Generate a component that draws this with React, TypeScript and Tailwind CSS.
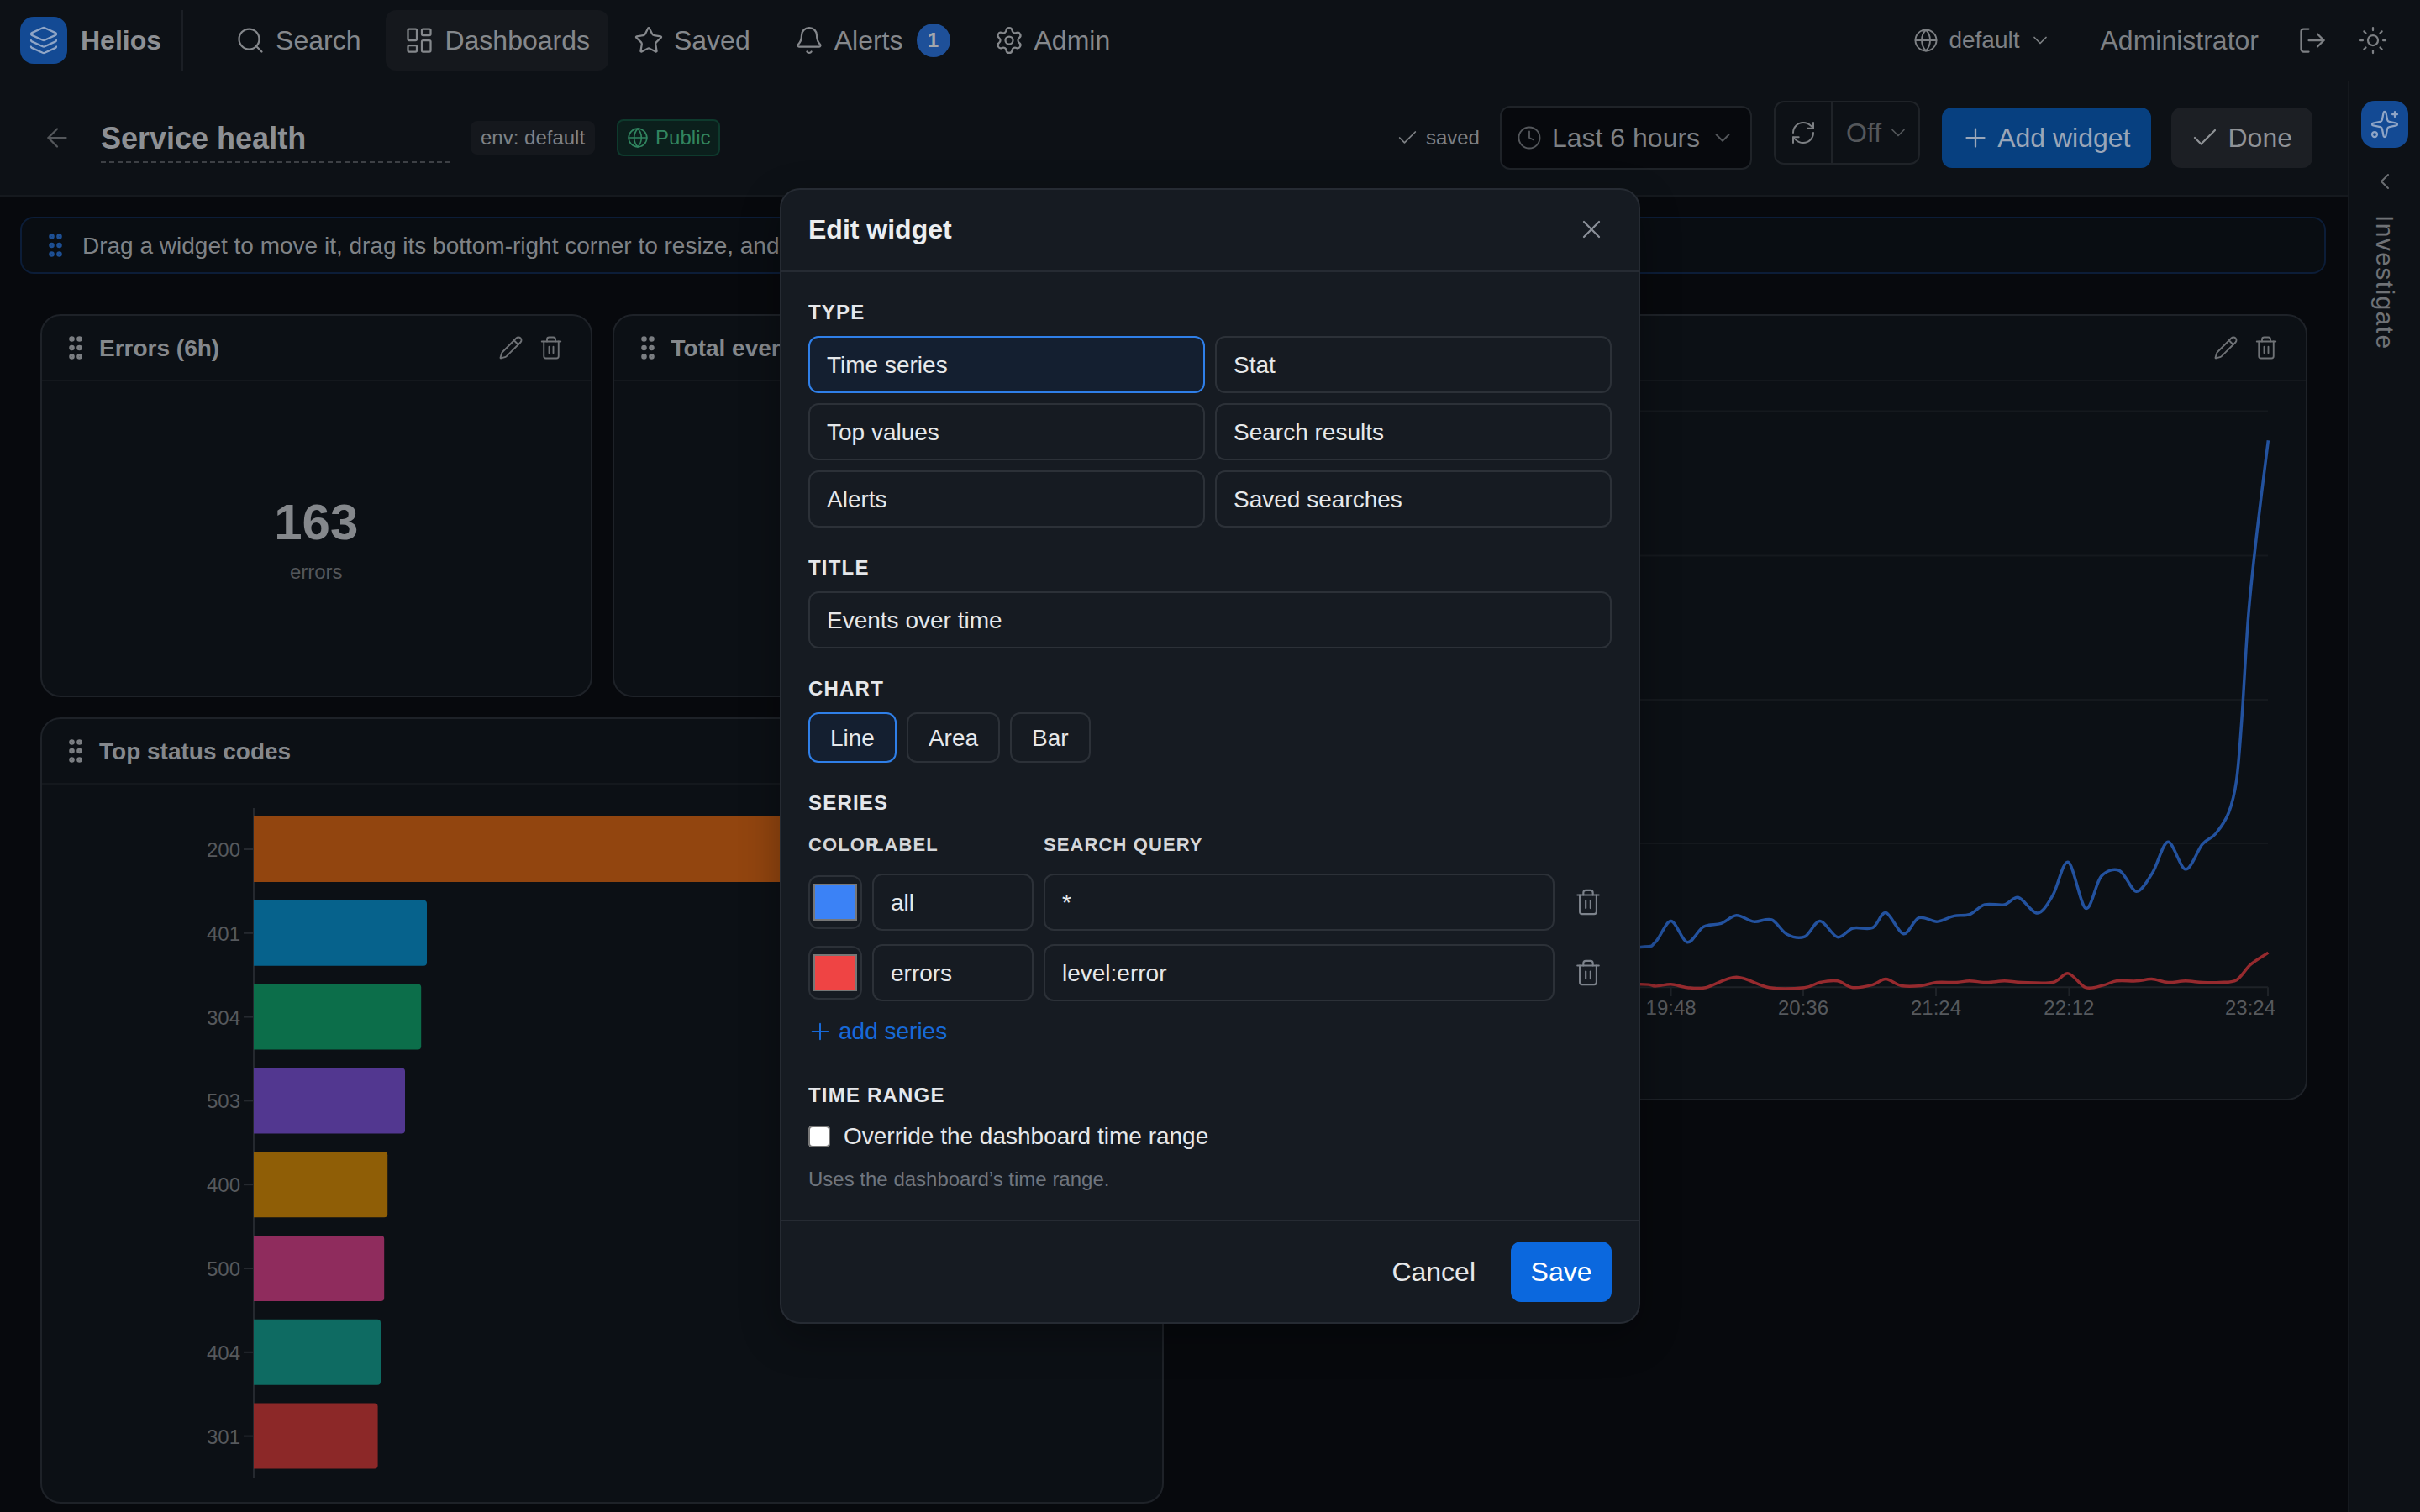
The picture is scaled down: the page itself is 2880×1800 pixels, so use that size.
import React from "react";
import {
  Layers, Search, LayoutDashboard, Star, Bell, Settings, Globe, ChevronDown, LogOut, Sun, ArrowLeft,
  Check, Clock, RefreshCw, Plus, Sparkles, ChevronLeft, GripVertical, Pencil, Trash2, X,
} from "lucide-react";

const mapX = (z: number) => (1940 + z / 1.912) / 2;
const mapY = (z: number) => (440 + z / 1.782) / 2;

const blue: [number, number][] = [[-300,1215],[-160,1225],[22,1225],[55,1215],[91,1170],[128,1215],[165,1182],[205,1175],[240,1158],[280,1171],[320,1167],[355,1198],[395,1203],[430,1170],[470,1204],[505,1185],[550,1184],[580,1152],[620,1197],[655,1163],[697,1171],[735,1159],[770,1156],[805,1135],[850,1135],[882,1120],[925,1153],[960,1115],[995,1045],[1035,1143],[1070,1075],[1112,1063],[1150,1107],[1187,1067],[1222,1002],[1262,1060],[1300,1007],[1330,985],[1360,940],[1378,870],[1390,740],[1405,520],[1425,340],[1450,150]];
const red: [number, number][] = [[-300,1305],[-160,1308],[22,1304],[55,1308],[91,1304],[128,1311],[170,1311],[240,1289],[315,1311],[395,1311],[430,1300],[470,1297],[505,1311],[550,1305],[580,1293],[615,1307],[660,1307],[695,1300],[740,1300],[770,1297],[810,1300],[850,1297],[890,1300],[960,1300],[995,1281],[1035,1311],[1075,1306],[1105,1297],[1150,1297],[1185,1293],[1222,1300],[1262,1297],[1300,1300],[1340,1300],[1378,1295],[1410,1262],[1450,1237]];

function smooth(points: [number, number][]) {
  const p = points.map(([x, y]) => [mapX(x), mapY(y)]);
  let d = `M${p[0][0]} ${p[0][1]}`;
  for (let i = 0; i < p.length - 1; i++) {
    const a = p[Math.max(i - 1, 0)], b = p[i], c = p[i + 1], e = p[Math.min(i + 2, p.length - 1)];
    const k = 0.16;
    d += ` C${b[0] + (c[0] - a[0]) * k} ${b[1] + (c[1] - a[1]) * k} ${c[0] - (e[0] - b[0]) * k} ${c[1] - (e[1] - b[1]) * k} ${c[0]} ${c[1]}`;
  }
  return d;
}

const bars = [
  { label: "200", w: 520, color: "#92450f" },
  { label: "401", w: 103, color: "#06628c" },
  { label: "304", w: 99.6, color: "#0c6e4a" },
  { label: "503", w: 90, color: "#523790" },
  { label: "400", w: 79.6, color: "#8f5e06" },
  { label: "500", w: 77.6, color: "#8f2c5d" },
  { label: "404", w: 75.5, color: "#0e6b62" },
  { label: "301", w: 73.8, color: "#8c2828" },
];

function NavItem({ icon, label, active, children }: { icon: React.ReactNode; label: string; active?: boolean; children?: React.ReactNode }) {
  return (
    <div className={`flex h-9 items-center gap-[6px] rounded-md px-[11px] text-[16px] text-[#85888c] ${active ? "bg-[#15181d]" : ""}`}>
      {icon}
      <span>{label}</span>
      {children}
    </div>
  );
}

function Card({ title, className, children }: { title: string; className?: string; children?: React.ReactNode }) {
  return (
    <div className={`flex flex-col overflow-hidden rounded-xl border border-[#1e2228] bg-[#0c1015] ${className ?? ""}`}>
      <div className="flex h-[39px] shrink-0 items-center border-b border-[#14181d] pl-[11px] pr-[16px]">
        <GripVertical size={18} strokeWidth={2.4} className="text-[#7b7e82]" />
        <span className="ml-[5px] flex-1 pt-px text-[14px] font-bold text-[#85888c]">{title}</span>
        <Pencil size={15} strokeWidth={1.5} className="text-[#6f7276]" />
        <Trash2 size={15} strokeWidth={1.5} className="ml-[9px] text-[#6f7276]" />
      </div>
      <div className="min-h-0 flex-1">{children}</div>
    </div>
  );
}

function SectionLabel({ children, className }: { children: React.ReactNode; className?: string }) {
  return <div className={`text-[12px] font-bold uppercase leading-4 tracking-[0.05em] text-[#e5e7eb] ${className ?? ""}`}>{children}</div>;
}

function TypeButton({ label, active }: { label: string; active?: boolean }) {
  return (
    <div className={`flex h-[34px] items-center rounded-md border px-[10px] pt-px text-[14px] text-[#e6e8ea] ${active ? "border-[#2f7fe8] bg-[#141f30]" : "border-[#2c3138]"}`}>
      {label}
    </div>
  );
}

const inputCls = "h-[34px] w-full rounded-md border border-[#2c3138] bg-transparent px-[10px] pt-px text-[14px] text-[#e6e8ea] outline-none";

function SeriesRow({ color, label, query }: { color: string; label: string; query: string }) {
  return (
    <>
      <input type="color" readOnly value={color} className="h-8 w-8 rounded-md border border-[#2c3138] bg-transparent" />
      <input readOnly value={label} className={inputCls} />
      <input readOnly value={query} className={inputCls} />
      <div className="flex justify-center">
        <Trash2 size={17} strokeWidth={1.5} className="text-[#7d838c]" />
      </div>
    </>
  );
}

function Modal() {
  return (
    <div className="absolute inset-0 flex items-center justify-center">
      <div className="w-[512px] rounded-xl border border-[#262b33] bg-[#161b22] shadow-[0_8px_24px_rgba(0,0,0,0.3)]">
        <div className="flex h-[49px] items-center justify-between border-b border-[#262b33] px-4 pb-px">
          <span className="text-[16px] font-bold text-[#eceef0]">Edit widget</span>
          <X size={18} strokeWidth={1.5} className="mr-[3px] text-[#8b9099]" />
        </div>
        <div className="px-4 pb-4 pt-4">
          <SectionLabel>Type</SectionLabel>
          <div className="mt-[6px] grid grid-cols-2 gap-[6px]">
            <TypeButton label="Time series" active />
            <TypeButton label="Stat" />
            <TypeButton label="Top values" />
            <TypeButton label="Search results" />
            <TypeButton label="Alerts" />
            <TypeButton label="Saved searches" />
          </div>
          <SectionLabel className="mt-4">Title</SectionLabel>
          <input readOnly value="Events over time" className={`${inputCls} mt-[6px] block`} />
          <SectionLabel className="mt-4">Chart</SectionLabel>
          <div className="mt-[6px] flex gap-[6px]">
            {["Line", "Area", "Bar"].map((c, i) => (
              <div key={c} className={`flex h-[30px] items-center rounded-md border px-[12px] pt-px text-[14px] text-[#e6e8ea] ${i === 0 ? "border-[#2f7fe8] bg-[#141f30]" : "border-[#2c3138]"}`}>
                {c}
              </div>
            ))}
          </div>
          <SectionLabel className="mt-4">Series</SectionLabel>
          <div className="mt-[9px] grid grid-cols-[32px_96px_1fr_28px] items-center gap-x-[6px] gap-y-2">
            <div className="mb-px text-[11px] font-bold leading-4 tracking-[0.05em] text-[#d5d7da]">COLOR</div>
            <div className="mb-px text-[11px] font-bold leading-4 tracking-[0.05em] text-[#d5d7da]">LABEL</div>
            <div className="mb-px text-[11px] font-bold leading-4 tracking-[0.05em] text-[#d5d7da]">SEARCH QUERY</div>
            <div />
            <SeriesRow color="#3b82f6" label="all" query="*" />
            <SeriesRow color="#ef4444" label="errors" query="level:error" />
          </div>
          <div className="mt-2 flex h-5 items-center gap-[3px] text-[14px] text-[#1769d8]">
            <Plus size={16} strokeWidth={1.5} className="-ml-px" />
            <span>add series</span>
          </div>
          <SectionLabel className="mt-5">Time range</SectionLabel>
          <label className="mt-[6px] flex h-[21px] items-center gap-2 text-[14px] text-[#e6e8ea]">
            <input type="checkbox" className="m-0 h-[13px] w-[13px]" />
            <span>Override the dashboard time range</span>
          </label>
          <div className="mt-[7px] text-[12px] leading-4 text-[#6f757e]">Uses the dashboard’s time range.</div>
        </div>
        <div className="flex items-center justify-end gap-[21px] border-t border-[#262b33] px-4 py-3">
          <span className="text-[16px] text-[#e6e8ea]">Cancel</span>
          <div className="flex h-9 w-[60px] items-center justify-center rounded-md bg-[#0b68de] text-[16px] text-white">Save</div>
        </div>
      </div>
    </div>
  );
}

function TimeChart() {
  const grid = [244.7, 330.8, 416.5, 502];
  const ticks = [
    { x: 993.8, t: "19:48" },
    { x: 1072.5, t: "20:36" },
    { x: 1151.5, t: "21:24" },
    { x: 1230.7, t: "22:12" },
  ];
  return (
    <svg viewBox="705 227 666 427" className="block h-[427px] w-[666px]">
      {grid.map((y) => (
        <line key={y} x1={760} x2={1349} y1={y} y2={y} stroke="#15191e" strokeWidth={1} />
      ))}
      <line x1={760} x2={1349} y1={587.6} y2={587.6} stroke="#1e2227" strokeWidth={1} />
      {ticks.map((k) => (
        <g key={k.t}>
          <line x1={k.x} x2={k.x} y1={587.6} y2={593} stroke="#1e2227" />
          <text x={k.x} y={604} textAnchor="middle" fontSize={12} fontFamily="'Liberation Sans', sans-serif" fill="#56595d">{k.t}</text>
        </g>
      ))}
      <line x1={1349} x2={1349} y1={587.6} y2={593} stroke="#1e2227" />
      <text x={1353.5} y={604} textAnchor="end" fontSize={12} fontFamily="'Liberation Sans', sans-serif" fill="#56595d">23:24</text>
      <path d={smooth(blue)} fill="none" stroke="#23529f" strokeWidth={1.75} strokeLinejoin="round" />
      <path d={smooth(red)} fill="none" stroke="#962a2e" strokeWidth={1.75} strokeLinejoin="round" />
    </svg>
  );
}

function BarChart() {
  return (
    <svg viewBox="25 467 666 427" className="block h-[427px] w-[666px]">
      <line x1={151} x2={151} y1={481} y2={879.5} stroke="#25292f" />
      {bars.map((b, i) => {
        const y = 486 + i * 49.9;
        return (
          <g key={b.label}>
            <path d={`M151 ${y}h${b.w - 2}a2 2 0 0 1 2 2v35a2 2 0 0 1 -2 2h-${b.w - 2}z`} fill={b.color} />
            <line x1={145} x2={151} y1={y + 19.5} y2={y + 19.5} stroke="#25292f" />
            <text x={143} y={y + 24} textAnchor="end" fontSize={12} fontFamily="'Liberation Sans', sans-serif" fill="#56595d">{b.label}</text>
          </g>
        );
      })}
    </svg>
  );
}

export default function App() {
  return (
    <div className="relative flex h-[900px] w-[1440px] flex-col overflow-hidden bg-[#0d1116] font-['Liberation_Sans',Arial,sans-serif] [zoom:2]">
      {/* top bar */}
      <div className="flex h-12 shrink-0 items-center pl-3 pr-[19px]">
        <div className="flex h-7 w-7 items-center justify-center rounded-lg bg-[#134a94]">
          <Layers size={18} strokeWidth={1.5} className="text-[#8fa5c6]" />
        </div>
        <span className="ml-2 text-[16px] font-bold text-[#8d9094]">Helios</span>
        <div className="ml-3 h-9 w-px bg-[#1b1f25]" />
        <div className="ml-[20px] flex items-center gap-1">
          <NavItem icon={<Search size={18} strokeWidth={1.5} />} label="Search" />
          <NavItem icon={<LayoutDashboard size={18} strokeWidth={1.5} />} label="Dashboards" active />
          <NavItem icon={<Star size={18} strokeWidth={1.5} />} label="Saved" />
          <NavItem icon={<Bell size={18} strokeWidth={1.5} />} label="Alerts">
            <span className="ml-[2px] flex h-5 w-5 items-center justify-center rounded-full bg-[#1e5099] text-[12px] font-bold text-[#a3a7ad]">1</span>
          </NavItem>
          <NavItem icon={<Settings size={18} strokeWidth={1.5} />} label="Admin" />
        </div>
        <div className="ml-auto flex items-center text-[#7d8084]">
          <Globe size={15} strokeWidth={1.5} />
          <span className="ml-[6px] text-[14px]">default</span>
          <ChevronDown size={14} strokeWidth={1.5} className="ml-[5px]" />
          <span className="ml-[29px] text-[16px]">Administrator</span>
          <LogOut size={18} strokeWidth={1.5} className="ml-[23px]" />
          <Sun size={18} strokeWidth={1.5} className="ml-[18px]" />
        </div>
      </div>

      <div className="flex min-h-0 flex-1">
        <div className="min-w-0 flex-1">
          {/* page header */}
          <div className="flex h-[69px] items-center border-b border-[#15191e] pl-[25px] pr-[21px]">
            <ArrowLeft size={18} strokeWidth={1.5} className="text-[#54575b]" />
            <div className="ml-[17px] w-[208px] border-b border-dashed border-[#3d4045] pt-[2px] text-[18px] font-bold text-[#8d9094]">Service health</div>
            <span className="ml-3 flex h-5 items-center rounded bg-[#15181d] px-[6px] text-[12px] text-[#7f8286]">env: default</span>
            <span className="ml-[13px] flex h-[22px] items-center gap-1 rounded border border-[#0e3a2d] bg-[#0b1f1c] px-[5px] text-[12px] text-[#318560]">
              <Globe size={13} strokeWidth={1.5} />
              Public
            </span>
            <div className="ml-auto flex items-center gap-[4px] text-[12px] text-[#7d8084]">
              <Check size={14} strokeWidth={1.5} />
              saved
            </div>
            <div className="ml-3 flex h-[38px] items-center rounded-md border border-[#1f2328] bg-[#07090d] pl-[9px] pr-[9px] text-[16px] text-[#7d8084]">
              <Clock size={15} strokeWidth={1.5} className="text-[#54575b]" />
              <span className="ml-[6px]">Last 6 hours</span>
              <ChevronDown size={15} strokeWidth={1.5} className="ml-[6px] text-[#54575b]" />
            </div>
            <div className="mb-[6px] ml-[13px] flex h-[38px] items-stretch rounded-md border border-[#1f2328] text-[#7d8084]">
              <div className="flex w-[34px] items-center justify-center border-r border-[#1f2328]">
                <RefreshCw size={16} strokeWidth={1.5} />
              </div>
              <div className="flex items-center pl-2 pr-[5px] text-[16px] text-[#54575b]">
                Off
                <ChevronDown size={14} strokeWidth={1.5} className="ml-[3px]" />
              </div>
            </div>
            <div className="ml-[13px] flex h-9 items-center gap-[4px] rounded-md bg-[#074080] pl-[11px] pr-[12px] text-[16px] text-[#9aa6b8]">
              <Plus size={18} strokeWidth={1.5} />
              Add widget
            </div>
            <div className="ml-3 flex h-9 items-center gap-[5px] rounded-md bg-[#1c1f24] pl-[11px] pr-[12px] text-[16px] text-[#8f9296]">
              <Check size={18} strokeWidth={1.5} />
              Done
            </div>
          </div>

          {/* main */}
          <div className="h-full bg-[#07090d] pt-3">
            <div className="ml-3 mr-[13px] flex h-[34px] items-center rounded-lg border border-[#0c1d38] bg-[#090d12] pl-[11px] text-[14px] text-[#7f8286]">
              <GripVertical size={18} strokeWidth={2.4} className="text-[#1d4f94]" />
              <span className="ml-[7px] pt-px">Drag a widget to move it, drag its bottom-right corner to resize, and use the pencil to edit.</span>
            </div>
            <div className="mx-6 mt-[24px] grid grid-cols-4 auto-rows-[228px] gap-3">
              <Card title="Errors (6h)">
                <div className="flex h-full flex-col items-center justify-center">
                  <div className="pt-[1px] text-[30px] font-bold leading-[39px] text-[#85888c]">163</div>
                  <div className="text-[12px] leading-5 text-[#54575b]">errors</div>
                </div>
              </Card>
              <Card title="Total events (6h)" />
              <Card title="Events over time" className="col-span-2 row-span-2">
                <TimeChart />
              </Card>
              <Card title="Top status codes" className="col-span-2 row-span-2">
                <BarChart />
              </Card>
            </div>
          </div>
        </div>

        {/* right rail */}
        <div className="flex w-[43px] shrink-0 flex-col items-center border-l border-[#15191e] pt-3">
          <div className="flex h-7 w-7 items-center justify-center rounded-lg bg-[#134a94]">
            <Sparkles size={18} strokeWidth={1.5} className="text-[#8fa5c6]" />
          </div>
          <ChevronLeft size={16} strokeWidth={1.5} className="mt-[12px] text-[#6b6e72]" />
          <span className="mt-[12px] text-[15px] tracking-[0.7px] text-[#6f7276] [writing-mode:vertical-rl]">Investigate</span>
        </div>
      </div>

      <Modal />
    </div>
  );
}
